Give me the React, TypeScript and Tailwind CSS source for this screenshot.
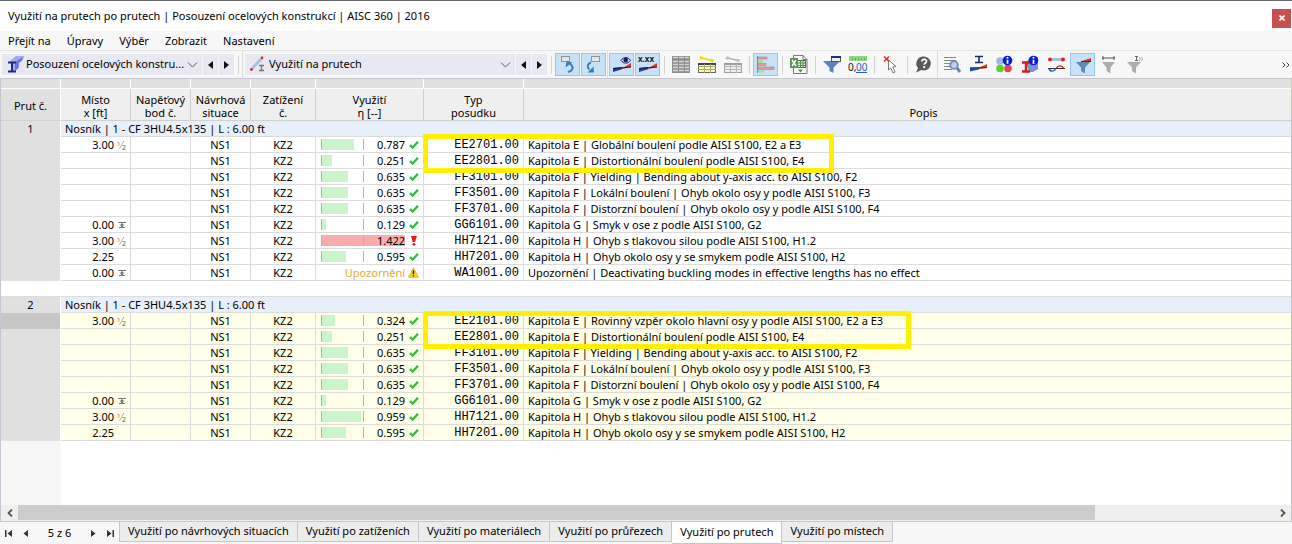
import React, { useState } from 'react';

type Mark = 'half' | 'start' | '';

interface CheckRow {
  x: string;
  mark: Mark;
  ratio: number | null;
  code: string;
  text: string;
}

interface MemberGroup {
  no: number;
  title: string;
  highlighted: boolean;
  rows: CheckRow[];
}

const groups: MemberGroup[] = [
  {
    no: 1,
    title: 'Nosník | 1 - CF 3HU4.5x135 | L : 6.00 ft',
    highlighted: false,
    rows: [
      { x: '3.00', mark: 'half', ratio: 0.787, code: 'EE2701.00', text: 'Kapitola E | Globální boulení podle AISI S100, E2 a E3' },
      { x: '', mark: '', ratio: 0.251, code: 'EE2801.00', text: 'Kapitola E | Distortionální boulení podle AISI S100, E4' },
      { x: '', mark: '', ratio: 0.635, code: 'FF3101.00', text: 'Kapitola F | Yielding | Bending about y-axis acc. to AISI S100, F2' },
      { x: '', mark: '', ratio: 0.635, code: 'FF3501.00', text: 'Kapitola F | Lokální boulení | Ohyb okolo osy y podle AISI S100, F3' },
      { x: '', mark: '', ratio: 0.635, code: 'FF3701.00', text: 'Kapitola F | Distorzní boulení | Ohyb okolo osy y podle AISI S100, F4' },
      { x: '0.00', mark: 'start', ratio: 0.129, code: 'GG6101.00', text: 'Kapitola G | Smyk v ose z podle AISI S100, G2' },
      { x: '3.00', mark: 'half', ratio: 1.422, code: 'HH7121.00', text: 'Kapitola H | Ohyb s tlakovou silou podle AISI S100, H1.2' },
      { x: '2.25', mark: '', ratio: 0.595, code: 'HH7201.00', text: 'Kapitola H | Ohyb okolo osy y se smykem podle AISI S100, H2' },
      { x: '0.00', mark: 'start', ratio: null, code: 'WA1001.00', text: 'Upozornění | Deactivating buckling modes in effective lengths has no effect' },
    ],
  },
  {
    no: 2,
    title: 'Nosník | 1 - CF 3HU4.5x135 | L : 6.00 ft',
    highlighted: true,
    rows: [
      { x: '3.00', mark: 'half', ratio: 0.324, code: 'EE2101.00', text: 'Kapitola E | Rovinný vzpěr okolo hlavní osy y podle AISI S100, E2 a E3' },
      { x: '', mark: '', ratio: 0.251, code: 'EE2801.00', text: 'Kapitola E | Distortionální boulení podle AISI S100, E4' },
      { x: '', mark: '', ratio: 0.635, code: 'FF3101.00', text: 'Kapitola F | Yielding | Bending about y-axis acc. to AISI S100, F2' },
      { x: '', mark: '', ratio: 0.635, code: 'FF3501.00', text: 'Kapitola F | Lokální boulení | Ohyb okolo osy y podle AISI S100, F3' },
      { x: '', mark: '', ratio: 0.635, code: 'FF3701.00', text: 'Kapitola F | Distorzní boulení | Ohyb okolo osy y podle AISI S100, F4' },
      { x: '0.00', mark: 'start', ratio: 0.129, code: 'GG6101.00', text: 'Kapitola G | Smyk v ose z podle AISI S100, G2' },
      { x: '3.00', mark: 'half', ratio: 0.959, code: 'HH7121.00', text: 'Kapitola H | Ohyb s tlakovou silou podle AISI S100, H1.2' },
      { x: '2.25', mark: '', ratio: 0.595, code: 'HH7201.00', text: 'Kapitola H | Ohyb okolo osy y se smykem podle AISI S100, H2' },
    ],
  },
];

const menuItems = ['Přejít na', 'Úpravy', 'Výběr', 'Zobrazit', 'Nastavení'];

const tabs = [
  'Využití po návrhových situacích',
  'Využití po zatíženích',
  'Využití po materiálech',
  'Využití po průřezech',
  'Využití po prutech',
  'Využití po místech',
];

const Icon = ({ children }: { children: React.ReactNode }) => (
  <svg width="19" height="19" viewBox="0 0 19 19" fill="none" className="shrink-0 overflow-visible" aria-hidden="true">
    {children}
  </svg>
);

/* Toolbar icons */

const UndoViewIcon = () => (
  <Icon>
    <rect x="3.500" y="1.500" width="8" height="5" fill="#e4e4e4" stroke="#949494" />
    <path d="M10 17c6-1.500 5.500-6 2-8" stroke="#3f7db8" strokeWidth="2" />
    <path d="M7.500 12.500 8.500 6l6 1.500z" fill="#3f7db8" />
  </Icon>
);

const RedoViewIcon = () => (
  <Icon>
    <rect x="7.500" y="1.500" width="8" height="5" fill="#e4e4e4" stroke="#949494" />
    <path d="M7 7.500C3 9 3 12.500 5.500 14.500" stroke="#3f7db8" strokeWidth="2" />
    <path d="M3.500 17.500H10l-.500-6z" fill="#3f7db8" />
  </Icon>
);

const Wedge = () => (
  <>
    <path d="M1 17v-4l9-1v2.200z" fill="#1c3fa8" />
    <path d="M10 13.500 19 8v4l-9 2z" fill="#e0341c" />
    <path d="M1 13.500 19 12" stroke="#1a1a3a" />
  </>
);

const EyeWedgeIcon = () => (
  <Icon>
    <Wedge />
    <path d="M9 5.500c2.500-4 7-4 9.500 0-2.500 3.500-7 3.500-9.500 0z" fill="#d5d5ee" stroke="#1b1b66" />
    <circle cx="13.700" cy="5" r="2.300" fill="#1b1b66" />
  </Icon>
);

const ValueWedgeIcon = () => (
  <Icon>
    <Wedge />
    <text x="0" y="6.500" fontSize="8" fontWeight="700" fill="#222" fontFamily="Noto Sans, sans-serif">x.xx</text>
  </Icon>
);

const GrayTableIcon = () => (
  <Icon>
    <rect x="1" y="1" width="18" height="17" fill="#8e8e8e" />
    {[2, 6, 9, 12, 15].map((y) => (
      <path key={y} d={`M2 ${y + 0.5}h5M8 ${y + 0.5}h5M14 ${y + 0.5}h4`} stroke="#d4d4d4" strokeWidth="1.500" />
    ))}
  </Icon>
);

const MemberTableIcon = ({ muted }: { muted?: boolean }) => (
  <Icon>
    <path d="M5 3 15 5.500" stroke={muted ? '#b5b5b5' : '#f0d400'} strokeWidth="1.500" />
    <circle cx="4.500" cy="3" r="1.800" fill={muted ? '#c4c4c4' : '#f5d800'} />
    <circle cx="15" cy="5.500" r="1.800" fill={muted ? '#c4c4c4' : '#f5d800'} />
    <rect x="1.500" y="8.500" width="17" height="9" fill={muted ? '#eeeeee' : '#fbf6a8'} stroke={muted ? '#9c9c9c' : '#666666'} />
    <path d="M1 9h18" stroke={muted ? '#9c9c9c' : '#444444'} strokeWidth="2" />
    <path d="M1 11.500h18M1 14.500h18M7.500 9v9M13.500 9v9" stroke={muted ? '#b8b8b8' : '#a9a777'} />
  </Icon>
);

const BarsIcon = () => (
  <Icon>
    <path d="M1.500 1v17" stroke="#8b8b8b" />
    <rect x="2" y="2" width="9" height="2" fill="#e69a9a" stroke="#9a7a7a" strokeWidth=".5" />
    <rect x="2" y="5" width="5" height="3" fill="#a8dba8" />
    <rect x="2" y="8.500" width="8" height="2" fill="#e69a9a" stroke="#9a7a7a" strokeWidth=".5" />
    <rect x="2" y="12" width="16" height="2.500" fill="#e69a9a" stroke="#9a7a7a" strokeWidth=".5" />
    <rect x="2" y="15.500" width="6" height="2" fill="#a8dba8" />
  </Icon>
);

const ExcelIcon = () => (
  <Icon>
    <path d="M4.500.500h9.500l4 4v14H4.500z" fill="#ffffff" stroke="#777" />
    <path d="M14 .500v4h4" stroke="#777" />
    <rect x="8.500" y="5.500" width="8" height="7" fill="#dff0dc" stroke="#3d7a35" />
    <path d="M8.500 8h8M8.500 10.500h8M11.500 5.500v7M14 5.500v7" stroke="#3d7a35" strokeWidth=".8" />
    <rect x="1" y="3" width="8" height="10" fill="#5d9455" />
    <path d="m3 5 4 6M7 5l-4 6" stroke="#fff" strokeWidth="1.400" />
    <path d="M9 14.500h5l-2.500 3z" fill="#4d8a44" />
  </Icon>
);

const FilterWindowIcon = () => (
  <Icon>
    <path d="M1 6h17l-6.500 6.500V18l-4-2v-3.500z" fill="#5b82bd" />
    <rect x="9.500" y="1.500" width="9" height="5" fill="#eeeeee" stroke="#555" />
    <path d="M9 2h10" stroke="#1f2f86" strokeWidth="2" />
  </Icon>
);

const DecimalsIcon = () => (
  <Icon>
    <rect x="1" y="1" width="18" height="5" fill="#8ad880" />
    <path d="M4.500 3v2M7.500 3v2M10.500 3v2M13.500 3v2M16.500 3v2" stroke="#4f9c48" strokeWidth=".8" />
    <text x="0" y="15.500" fontSize="10" fill="#111" fontFamily="Noto Sans, sans-serif">0,</text>
    <text x="8" y="15.500" fontSize="10" fill="#2a5bd0" fontFamily="Noto Sans, sans-serif">00</text>
    <path d="M8 17.500h11" stroke="#2a5bd0" />
  </Icon>
);

const CursorClearIcon = () => (
  <Icon>
    <path d="M7.500 5v10l2.300-2 2.200 5 2-1-2.200-5 3.200-.500z" fill="#fff" stroke="#777" />
    <path d="m3 1.500 5 5M8 1.500l-5 5" stroke="#e0201c" strokeWidth="1.400" />
  </Icon>
);

const HelpIcon = () => (
  <Icon>
    <path d="M10 1.500a7 7 0 1 1-2.500 13.600L2 17.500l2-4.500A7 7 0 0 1 10 1.500z" fill="#5a5a5a" />
    <path d="M7.800 6.500c.3-3 4.900-2.700 4.700 0-.1 1.500-2.300 1.600-2.300 3.300" stroke="#fff" strokeWidth="1.700" />
    <circle cx="10.200" cy="12.200" r="1.100" fill="#fff" />
  </Icon>
);

const DetailsIcon = () => (
  <Icon>
    <path d="M1 2.500h12M1 5.500h12M1 8.500h7M1 11.500h6M1 14.500h8" stroke="#888" strokeWidth="1.200" />
    <circle cx="11" cy="10" r="3.800" fill="#bcd3f0" stroke="#7288b5" strokeWidth="1.800" />
    <path d="m14 13 3 4" stroke="#6b83b5" strokeWidth="3" />
  </Icon>
);

const SectionWedgeIcon = () => (
  <Icon>
    <path d="M6 1.500h8M6 7.500h8M10 2v5" stroke="#17306e" strokeWidth="1.600" />
    <path d="M1 16.500v-4h9v2z" fill="#1c57b0" />
    <path d="M10 12.500 18 9v4l-8 1z" fill="#d9401c" />
    <path d="M1 13 18 12.500" stroke="#333" />
  </Icon>
);

const InfoBadge = () => (
  <>
    <circle cx="12.500" cy="5.500" r="4.800" fill="#0a1be0" />
    <path d="M12.500 4.800v4" stroke="#fff" strokeWidth="1.800" />
    <circle cx="12.500" cy="2.800" r="1" fill="#fff" />
  </>
);

const MaterialsInfoIcon = () => (
  <Icon>
    <circle cx="5" cy="6" r="3.800" fill="#a3b6ea" />
    <circle cx="5" cy="13.500" r="3.800" fill="#56d621" />
    <circle cx="13" cy="13.500" r="3.800" fill="#e34848" />
    <InfoBadge />
  </Icon>
);

const SectionInfoIcon = () => (
  <Icon>
    <path d="m5 7 5-5h7v12l-5 3H8z" fill="#7d93c6" />
    <path d="M1 7.500h8M1 16.500h8M5 8v8" stroke="#d01d1d" strokeWidth="2.400" />
    <InfoBadge />
  </Icon>
);

const MemberDiagramIcon = () => (
  <Icon>
    <path d="M4 4.500h11" stroke="#a6bedb" strokeWidth="3" />
    <circle cx="3" cy="4.500" r="2" fill="#d9241f" />
    <circle cx="16" cy="4.500" r="2" fill="#d9241f" />
    <path d="M1 13.500h17" stroke="#333" />
    <path d="M2 13.500c1 3.500 5 3.500 7 0" stroke="#2a4de0" strokeWidth="1.400" />
    <path d="M9 13.500c2-3.500 6-3.500 7.500 0" stroke="#c82222" strokeWidth="1.400" />
  </Icon>
);

const FilterWedgeIcon = () => (
  <Icon>
    <path d="M3 7h14l-5 5.500v6l-4-2.500v-3.500z" fill="#5f86bd" />
    <path d="M9 6 18 3v3z" fill="#cf3a22" />
    <path d="M8 6.500h10" stroke="#333" />
  </Icon>
);

const FilterMemberIcon = () => (
  <Icon>
    <path d="M3 7h13l-4.500 5.500v6l-4-2.500v-3.500z" fill="#adadad" />
    <path d="M4 3h11" stroke="#777" strokeWidth="1.300" />
    <path d="M3 1.500h2v3H3zM14 1.500h2v3h-2z" fill="#777" />
  </Icon>
);

const FilterSectionIcon = () => (
  <Icon>
    <path d="M2 7h14l-5 5.500v6l-4-2.500v-3.500z" fill="#adadad" />
    <path d="M10 1.500h3M10 5.500h3M11.500 2v3.500" stroke="#666" />
    <path d="M14.500 2q1.500 2 0 4M16.500 2q2 2 0 4" stroke="#999" strokeWidth=".8" />
  </Icon>
);

const SteelIcon = () => (
  <Icon>
    <path d="m4 6 6-5h8l-1 3-4 3-1 6-5 4z" fill="#a3a8f0" />
    <path d="m9 7 8-5-.5 3-3.500 3-.5 5-3.500 3z" fill="#6b74dd" />
    <path d="M2 7.500h8M2 16.500h8M6 8v8" stroke="#1c2a86" strokeWidth="2" />
  </Icon>
);

const MemberIcon = () => (
  <Icon>
    <path d="M3.500 13 12 4" stroke="#a8c0e0" strokeWidth="3" />
    <circle cx="2.500" cy="14.500" r="1.400" fill="#d9241f" />
    <circle cx="13" cy="3" r="1.400" fill="#d9241f" />
    <path d="M10 10.500h5M10 15.500h5M12.500 11v4" stroke="#777" strokeWidth="1.400" />
  </Icon>
);

/* Table markers */

const LocationMark = ({ mark }: { mark: Mark }) => (
  <svg width="10" height="10" viewBox="0 0 10 10" fill="none" className="overflow-visible" aria-hidden="true">
    {mark === 'half' && (
      <>
        <text x="0" y="6" fontSize="6" fill="#777" fontFamily="Noto Sans, sans-serif">1</text>
        <path d="M2.500 8.500 7 1" stroke="#999" strokeWidth=".8" />
        <text x="5" y="10" fontSize="7" fill="#555" fontFamily="Noto Sans, sans-serif">2</text>
      </>
    )}
    {mark === 'start' && (
      <>
        <path d="M1 2.500h8M2 7.500h6" stroke="#777" />
        <path d="M5 3 2.500 5.500h1.500V7h2V5.500h1.500z" fill="#777" />
      </>
    )}
  </svg>
);

const StatusMark = ({ ratio }: { ratio: number | null }) => (
  <svg width="11" height="11" viewBox="0 0 11 11" fill="none" aria-hidden="true">
    {ratio === null ? (
      <>
        <path d="M5.500.500 10.700 10.500H.300z" fill="#f5d21f" stroke="#c9a400" strokeWidth=".5" />
        <path d="M5.500 3.500v3.700" stroke="#222" strokeWidth="1.400" />
        <circle cx="5.500" cy="8.800" r=".8" fill="#222" />
      </>
    ) : ratio > 1 ? (
      <>
        <path d="M3 1h6L8 4 7.300 7H4.700L4 4z" fill="#f01414" />
        <circle cx="6" cy="9.300" r="1.400" fill="#f01414" />
      </>
    ) : (
      <path d="m2 6 2.700 2.800L10 2.800" stroke="#2db83d" strokeWidth="2.200" />
    )}
  </svg>
);

const RatioCell = ({ ratio }: { ratio: number | null }) => {
  const over = ratio !== null && ratio > 1;
  // half of the track stands for a ratio of 1, an exceeded check fills it whole
  const fill = over ? 100 : (ratio ?? 0) * 50;
  return (
    <div className="flex h-[15px] items-center pr-1 pl-[5px]">
      <div className="relative mr-[3px] flex h-[11px] w-[85px] items-center justify-end">
        {ratio !== null && (
          <>
            <div
              className={`absolute inset-y-0 left-0 ${over ? 'bg-[#faabab]' : 'bg-[#caf5ca]'}`}
              style={{ width: `${fill}%` }}
            />
            <div className="absolute inset-y-0 left-0 w-px bg-[#b4b4b4]" />
            <div className="absolute inset-y-0 left-1/2 w-px bg-[#b4b4b4]" />
          </>
        )}
        <span className={`relative ${ratio === null ? 'text-[#e8a72c]' : ''}`}>
          {ratio === null ? 'Upozornění' : ratio.toFixed(3)}
        </span>
      </div>
      <StatusMark ratio={ratio} />
    </div>
  );
};

/* Toolbar parts */

const ToolButton = ({ label, active, children }: { label: string; active?: boolean; children: React.ReactNode }) => (
  <button
    type="button"
    aria-label={label}
    className={`flex h-[23px] w-[25px] shrink-0 items-center justify-center border ${
      active ? 'border-[#93c7f0] bg-[#c6e2f8]' : 'border-transparent hover:bg-[#e0eefa]'
    }`}
  >
    {children}
  </button>
);

const Separator = () => (
  <div className="flex w-[6px] shrink-0 justify-center">
    <div className="h-[18px] w-px bg-[#d2d2d2]" />
  </div>
);

const Divider = () => <div className="w-px shrink-0 self-stretch bg-[#dcdcdc]" />;

const StepButton = ({ dir }: { dir: 'prev' | 'next' }) => (
  <button
    type="button"
    aria-label={dir === 'prev' ? 'Předchozí' : 'Další'}
    className="flex h-[21px] w-[15px] shrink-0 items-center justify-center bg-[#e8e8f2]"
  >
    <svg width="5" height="8" viewBox="0 0 5 8" aria-hidden="true">
      <path d={dir === 'prev' ? 'M5 0v8L0 4z' : 'M0 0v8l5-4z'} fill="#111" />
    </svg>
  </button>
);

const Combo = ({ label, value, icon, width }: { label: string; value: string; icon: React.ReactNode; width: string }) => (
  <div className={`relative flex h-[21px] shrink-0 items-center bg-[#e8e8f2] pl-1 ${width}`}>
    {icon}
    <select aria-label={label} className="h-full min-w-0 flex-1 appearance-none bg-transparent pl-px outline-none">
      <option>{value}</option>
    </select>
    <svg className="pointer-events-none absolute right-1 top-2" width="11" height="6" viewBox="0 0 11 6" fill="none" aria-hidden="true">
      <path d="m1 .5 4.500 4.500L10 .5" stroke="#555" />
    </svg>
  </div>
);

const Toolbar = () => (
  <div className="flex h-7 items-center gap-px overflow-hidden border-t border-[#e4e4e4] bg-[#f7f7f7] pl-0.5">
    <Combo label="Modul" value="Posouzení ocelových konstru..." icon={<SteelIcon />} width="w-[200px]" />
    <StepButton dir="prev" />
    <StepButton dir="next" />
    <Separator />
    <Divider />
    <div className="ml-px flex items-center gap-px">
      <Combo label="Tabulka" value="Využití na prutech" icon={<MemberIcon />} width="w-[270px]" />
      <StepButton dir="prev" />
      <StepButton dir="next" />
      <Separator />
    </div>
    <ToolButton label="Zpět v pohledu" active><UndoViewIcon /></ToolButton>
    <ToolButton label="Vpřed v pohledu" active><RedoViewIcon /></ToolButton>
    <Divider />
    <ToolButton label="Zobrazit výsledky" active><EyeWedgeIcon /></ToolButton>
    <ToolButton label="Zobrazit hodnoty" active><ValueWedgeIcon /></ToolButton>
    <Separator />
    <ToolButton label="Celá tabulka"><GrayTableIcon /></ToolButton>
    <ToolButton label="Vybrané pruty"><MemberTableIcon /></ToolButton>
    <ToolButton label="Ostatní pruty"><MemberTableIcon muted /></ToolButton>
    <Separator />
    <ToolButton label="Barevné pruhy" active><BarsIcon /></ToolButton>
    <Separator />
    <ToolButton label="Export do Excelu"><ExcelIcon /></ToolButton>
    <Separator />
    <ToolButton label="Filtr"><FilterWindowIcon /></ToolButton>
    <ToolButton label="Desetinná místa"><DecimalsIcon /></ToolButton>
    <Separator />
    <ToolButton label="Zrušit výběr"><CursorClearIcon /></ToolButton>
    <Separator />
    <ToolButton label="Nápověda"><HelpIcon /></ToolButton>
    <Divider />
    <div className="ml-px flex gap-px">
      <ToolButton label="Detaily posouzení"><DetailsIcon /></ToolButton>
      <ToolButton label="Průřez"><SectionWedgeIcon /></ToolButton>
      <ToolButton label="Informace o materiálech"><MaterialsInfoIcon /></ToolButton>
      <ToolButton label="Informace o průřezu"><SectionInfoIcon /></ToolButton>
      <ToolButton label="Průběhy na prutu"><MemberDiagramIcon /></ToolButton>
      <ToolButton label="Filtr výsledků" active><FilterWedgeIcon /></ToolButton>
      <ToolButton label="Filtr prutů"><FilterMemberIcon /></ToolButton>
      <ToolButton label="Filtr průřezů"><FilterSectionIcon /></ToolButton>
    </div>
    <button type="button" aria-label="Další nástroje" className="ml-auto flex h-full w-3 items-center justify-center">
      <svg width="8" height="6" viewBox="0 0 8 6" fill="none" aria-hidden="true">
        <path d="m.5.5 2.500 2.500L.5 5.500M4.500.5 7 3 4.500 5.500" stroke="#444" />
      </svg>
    </button>
  </div>
);

const headClass = 'border-r border-b border-[#d0d0d0] bg-[#efefef] px-1 pb-px align-bottom font-normal leading-[13px]';
const cellClass = 'border-r border-b border-[#dcdcdc]';

const ResultsTable = () => (
  <table className="w-full table-fixed border-separate border-spacing-0">
    <colgroup>
      <col className="w-[60px]" />
      <col className="w-[70px]" />
      <col className="w-[60px]" />
      <col className="w-[60px]" />
      <col className="w-[65px]" />
      <col className="w-[108px]" />
      <col className="w-[100px]" />
      <col />
    </colgroup>
    <thead>
      <tr className="h-[10px]">
        {[0, 1, 2, 3, 4, 5, 6, 7].map((col) => (
          <td key={col} className="border-r border-b border-white bg-[#e0e0e0] last:border-r-0" />
        ))}
      </tr>
      <tr className="h-8">
        <th className="border-r border-b border-r-white border-b-[#d0d0d0] bg-[#e0e0e0] pt-1 font-normal">Prut č.</th>
        <th className={headClass}>Místo<br />x [ft]</th>
        <th className={headClass}>Napěťový<br />bod č.</th>
        <th className={headClass}>Návrhová<br />situace</th>
        <th className={headClass}>Zatížení<br />č.</th>
        <th className={headClass}>Využití<br />η [--]</th>
        <th className={headClass}>Typ<br />posudku</th>
        <th className={`${headClass} border-r-0 pl-9`}>Popis</th>
      </tr>
    </thead>
    {groups.map((group, groupIndex) => (
      <tbody key={group.no}>
        {groupIndex > 0 && (
          <tr className="h-4">
            <td colSpan={8} className="border-b border-[#dcdcdc] bg-white" />
          </tr>
        )}
        <tr className="h-4">
          <th className="border-r border-white bg-[#e0e0e0] pb-px font-normal leading-[15px]">{group.no}</th>
          <td colSpan={7} className="border-b border-[#dcdcdc] bg-[#e7effb] pl-1 leading-[15px]">{group.title}</td>
        </tr>
        {group.rows.map((row, i) => (
          <tr key={row.code} className={`h-4 leading-[15px] ${group.highlighted ? 'bg-[#fffee6]' : 'bg-white'}`}>
            <td className={`border-r border-white ${group.highlighted && i === 0 ? 'bg-[#c6c6c6]' : 'bg-[#e0e0e0]'}`} />
            <td className={cellClass}>
              <div className="flex items-center justify-end gap-[3px] pr-[3px]">
                {row.x}
                <LocationMark mark={row.mark} />
              </div>
            </td>
            <td className={cellClass} />
            <td className={`${cellClass} text-center`}>NS1</td>
            <td className={`${cellClass} text-center`}>KZ2</td>
            <td className={cellClass}><RatioCell ratio={row.ratio} /></td>
            <td className={`${cellClass} pr-1 text-right font-['Liberation_Mono',monospace] text-[12px] leading-[14px]`}>{row.code}</td>
            <td className="truncate border-b border-[#dcdcdc] pl-1">{row.text}</td>
          </tr>
        ))}
      </tbody>
    ))}
  </table>
);

const PagerButton = ({ label, path }: { label: string; path: string }) => (
  <button type="button" aria-label={label} className="flex h-5 w-[17px] items-center justify-center">
    <svg width="8" height="7" viewBox="0 0 8 7" aria-hidden="true">
      <path d={path} fill="#333" />
    </svg>
  </button>
);

export default function App() {
  const [activeTab, setActiveTab] = useState(4);

  return (
    <div className="flex min-h-screen flex-col border-t border-[#6b6b6b] bg-[#f7f7f7] font-['Noto_Sans','Open_Sans',sans-serif] text-[11px] text-black">
      {/* Title bar */}
      <header className="flex h-[30px] items-center justify-between bg-white pr-px pl-2">
        <h1>Využití na prutech po prutech | Posouzení ocelových konstrukcí | AISC 360 | 2016</h1>
        <button type="button" aria-label="Zavřít" className="mt-1 flex h-[19px] w-[19px] items-center justify-center bg-[#c75050]">
          <svg width="6" height="6" viewBox="0 0 6 6" fill="none" aria-hidden="true">
            <path d="m.5.5 5 5M5.500.5l-5 5" stroke="#fff" strokeWidth="1.600" />
          </svg>
        </button>
      </header>

      {/* Menu */}
      <nav className="flex h-[19px] items-center gap-4 pt-0.5 pl-2">
        {menuItems.map((item) => (
          <button key={item} type="button">{item}</button>
        ))}
      </nav>

      <Toolbar />

      {/* Results */}
      <main className="relative flex flex-1 flex-col border border-[#c6c6d0] bg-white">
        <ResultsTable />
        <div className="flex flex-1">
          <div className="w-[60px] bg-[#f7f7f7]" />
        </div>

        <div className="flex h-4 items-stretch bg-[#efefef] pb-px">
          <button type="button" aria-label="Posunout vlevo" className="flex w-[17px] items-center justify-center">
            <svg width="6" height="8" viewBox="0 0 6 8" fill="none" aria-hidden="true">
              <path d="M5 .5 1.500 4 5 7.500" stroke="#555" strokeWidth="1.800" />
            </svg>
          </button>
          <div className="flex-1">
            <div className="h-full w-6/7 bg-[#cccccc]" />
          </div>
          <button type="button" aria-label="Posunout vpravo" className="flex w-[17px] items-center justify-center">
            <svg width="6" height="8" viewBox="0 0 6 8" fill="none" aria-hidden="true">
              <path d="M1 .5 4.500 4 1 7.500" stroke="#555" strokeWidth="1.800" />
            </svg>
          </button>
        </div>

        {/* Highlight frames over the compared checks */}
        <div className="pointer-events-none absolute top-[55px] left-[422px] h-[39px] w-[411px] border-5 border-[#fff000]" />
        <div className="pointer-events-none absolute top-[232px] left-[422px] h-[38px] w-[488px] border-5 border-[#fff000]" />
      </main>

      {/* Table tabs */}
      <footer className="flex h-[22px] items-start">
        <div className="flex h-full w-[119px] items-center justify-between">
          <PagerButton label="První" path="M0 0h1.500v7H0zM7 0v7L2.500 3.500z" />
          <PagerButton label="Předchozí tabulka" path="M6 0v7L1.500 3.500z" />
          <span className="px-3">5 z 6</span>
          <PagerButton label="Další tabulka" path="M2 0v7l4.500-3.500z" />
          <PagerButton label="Poslední" path="M6.500 0H8v7H6.500zM1 0v7l4.500-3.500z" />
        </div>
        <div role="tablist" className="flex items-start">
          {tabs.map((tab, i) => (
            <button
              key={tab}
              type="button"
              role="tab"
              aria-selected={i === activeTab}
              onClick={() => setActiveTab(i)}
              className={`border-r border-b border-[#c6c6d0] px-2 first:border-l ${
                i === activeTab ? 'h-[22px] bg-white' : 'h-5 bg-[#ececec]'
              }`}
            >
              {tab}
            </button>
          ))}
        </div>
      </footer>
    </div>
  );
}
